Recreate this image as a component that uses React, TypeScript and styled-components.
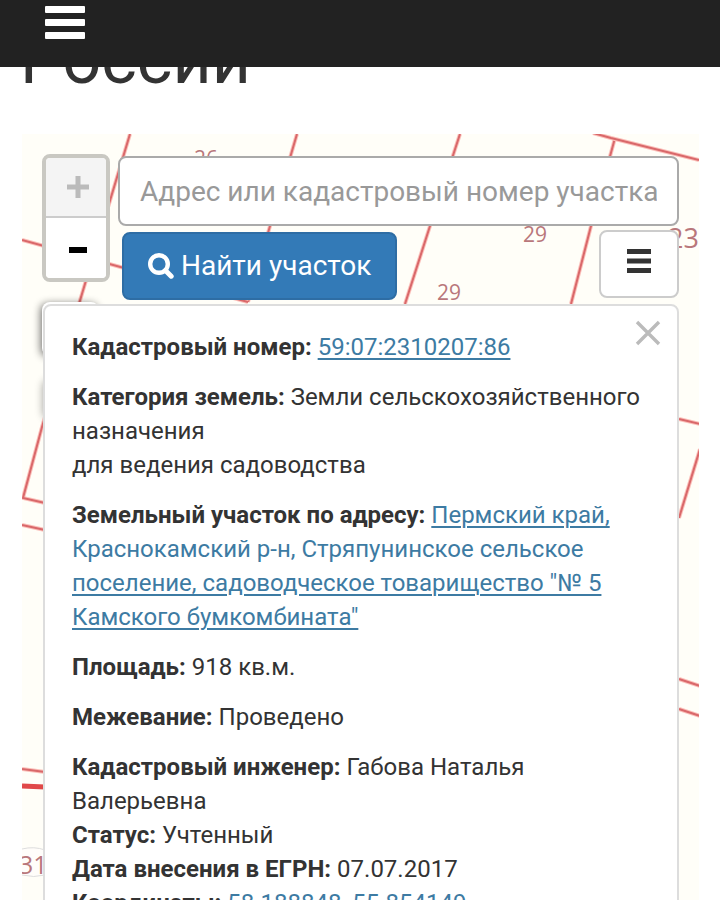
import React from "react";
import styled, { createGlobalStyle } from "styled-components";

const GlobalStyle = createGlobalStyle`
  * { box-sizing: border-box; }
  body {
    margin: 0;
    background: #fff;
    color: #333;
    font-family: Roboto, "Liberation Sans", sans-serif;
    font-size: 24px;
    line-height: 34px;
  }
  button, input { font: inherit; }
`;

const Page = styled.div`
  height: 100vh;
  overflow: hidden;
  display: flex;
  flex-direction: column;
`;

const Header = styled.header`
  position: fixed;
  inset: 0 0 auto 0;
  z-index: 10;
  height: 67px;
  padding: 6px 45px;
  background: #222;
`;

const NavToggle = styled.button`
  display: block;
  padding: 0;
  border: 0;
  background: none;
  cursor: pointer;

  svg { display: block; }
`;

const Title = styled.h1`
  flex: none;
  margin: 0;
  padding: 20px 20px 34px;
  font-size: 68px;
  font-weight: 400;
  line-height: 80px;
`;

const MapArea = styled.main`
  position: relative;
  flex: 1;
  min-height: 0;
  margin: 0 21px 0 22px;
  padding: 20px 20px 0;
  background: #fffef8;
  display: flex;
  flex-direction: column;
  gap: 4px;
`;

const MapDrawing = styled.svg`
  position: absolute;
  inset: 0;
  width: 100%;
  height: 100%;
`;

const Controls = styled.div`
  position: relative;
  display: flex;
  align-items: flex-start;
  gap: 8px;
`;

const ZoomBar = styled.div`
  flex: none;
  width: 68px;
  border: 4px solid #c9c8c2;
  border-radius: 8px;
  overflow: hidden;
`;

const ZoomButton = styled.button`
  display: flex;
  align-items: center;
  justify-content: center;
  width: 100%;
  height: 60px;
  padding: 4px 0 0 4px;
  border: 0;
  background: #fff;
  color: #000;
  cursor: pointer;

  &:disabled {
    padding: 0 0 0 4px;
    border-bottom: 2px solid #ccc;
    background: #f4f4f4;
    color: #bbb;
    cursor: default;
  }
`;

const SearchForm = styled.form`
  flex: 1;
  min-width: 0;
  padding-top: 2px;
  display: flex;
  flex-direction: column;
  gap: 4px;
`;

const SearchInput = styled.input`
  width: 100%;
  height: 70px;
  padding: 0 20px;
  border: 2px solid #aaa;
  border-radius: 8px;
  background: #fff;
  color: #555;
  font-size: 28px;

  &::placeholder { color: #999; opacity: 1; }
`;

const ButtonRow = styled.div`
  display: flex;
  justify-content: space-between;
  padding-left: 4px;
`;

const FindButton = styled.button`
  display: flex;
  align-items: center;
  gap: 7px;
  height: 68px;
  margin-top: 2px;
  padding: 0 24px;
  border: 2px solid #2e6da4;
  border-radius: 8px;
  background: #337ab7;
  color: #fff;
  font-size: 28px;
  cursor: pointer;
`;

const MenuButton = styled.button`
  display: flex;
  align-items: center;
  justify-content: center;
  width: 80px;
  height: 68px;
  padding: 0 0 6px;
  border: 2px solid #ccc;
  border-radius: 8px;
  background: #fff;
  cursor: pointer;
`;

const InfoCard = styled.section`
  position: relative;
  flex: none;
  margin-left: 1px;
  padding: 24px 27px;
  border: 2px solid #ddd;
  border-radius: 8px;
  background: #fff;
`;

const CloseButton = styled.button`
  position: absolute;
  top: 14px;
  right: 16px;
  padding: 0;
  border: 0;
  background: none;
  cursor: pointer;

  svg { display: block; }
`;

const Paragraph = styled.p`
  margin: 0 0 16px;
`;

const Label = styled.b`
  font-weight: 700;
`;

const Link = styled.a`
  color: #3d7ba3;
  text-decoration: none;
`;

const Underlined = styled.span`
  text-decoration: underline;
  text-decoration-thickness: 2px;
  text-underline-offset: 3px;
`;

const boundaries = [
  "M130 134 L42 427 L23 498 L45 503",
  "M297 134 L270 226 L248 302",
  "M460 134 L430 226 L405 304",
  "M615 138 L591 226 L571 304",
  "M593 133 L611 138 L699 160",
  "M22 240 L248 302",
  "M22 525 L45 530",
  "M22 769 L45 772",
  "M679 419 L700 424",
  "M700 449 L679 518",
  "M679 679 L700 686",
  "M679 709 L700 716",
];

const plotNumbers = [
  { x: 194, y: 166, size: 21, text: "26" },
  { x: 523, y: 242, size: 21, text: "29" },
  { x: 437, y: 300, size: 21, text: "29" },
  { x: 668, y: 248, size: 27, text: "23" },
  { x: 19, y: 874, size: 25, text: "31" },
];

function PlotMap() {
  return (
    <MapDrawing viewBox="22 134 677 766" preserveAspectRatio="xMinYMin slice" aria-hidden="true">
      <defs>
        <filter id="shade" x="-50%" y="-50%" width="200%" height="200%">
          <feGaussianBlur stdDeviation="4" />
        </filter>
      </defs>
      <g fill="none">
        {boundaries.map((d) => (
          <React.Fragment key={d}>
            <path d={d} stroke="#fbc0ba" strokeWidth="4" />
            <path d={d} stroke="#d9686a" strokeWidth="2" />
          </React.Fragment>
        ))}
        <path d="M22 786 L45 787" stroke="#e04848" strokeWidth="5" />
      </g>
      <path d="M22 849 Q34 846 45 850 V875 Q34 878 22 875" fill="#fffdfa" stroke="#ddd" />
      {plotNumbers.map((n) => (
        <text
          key={`${n.x}-${n.y}`}
          x={n.x}
          y={n.y}
          fontSize={n.size}
          fontWeight="500"
          fontFamily='"Open Sans", "Noto Sans", sans-serif'
          fill="#b9777b"
        >
          {n.text}
        </text>
      ))}
      <g fill="#000" opacity="0.6" filter="url(#shade)">
        <rect x="41" y="304" width="56" height="52" rx="6" />
        <rect x="43" y="380" width="54" height="38" rx="6" opacity="0.6" />
      </g>
      <rect x="42" y="302" width="57" height="54" rx="8" fill="#fff" />
    </MapDrawing>
  );
}

export default function App() {
  return (
    <>
      <GlobalStyle />
      <Page>
        <Header>
          <NavToggle type="button" aria-label="Меню">
            <svg width="40" height="33" viewBox="0 0 40 33" fill="#fff">
              <rect width="40" height="7" rx="1" />
              <rect y="13" width="40" height="7" rx="1" />
              <rect y="26" width="40" height="7" rx="1" />
            </svg>
          </NavToggle>
        </Header>
        <Title>России</Title>
        <MapArea>
          <PlotMap />
          <Controls>
            <ZoomBar>
              <ZoomButton type="button" disabled aria-label="Приблизить">
                <svg width="22" height="22" viewBox="0 0 22 22" fill="currentColor">
                  <path d="M8.5 0h5v8.5H22v5h-8.5V22h-5v-8.5H0v-5h8.5z" />
                </svg>
              </ZoomButton>
              <ZoomButton type="button" aria-label="Отдалить">
                <svg width="18" height="6" viewBox="0 0 18 6" fill="currentColor">
                  <path d="M0 0h18v6H0z" />
                </svg>
              </ZoomButton>
            </ZoomBar>
            <SearchForm onSubmit={(e) => e.preventDefault()}>
              <SearchInput
                type="text"
                aria-label="Адрес или кадастровый номер участка"
                placeholder="Адрес или кадастровый номер участка"
              />
              <ButtonRow>
                <FindButton type="submit">
                  <svg width="26" height="26" viewBox="0 0 26 26" fill="none" stroke="#fff" aria-hidden="true">
                    <circle cx="11" cy="11" r="8.8" strokeWidth="4.4" />
                    <path d="M17.5 17.5 L23.2 23.2" strokeWidth="5" strokeLinecap="round" />
                  </svg>
                  Найти участок
                </FindButton>
                <MenuButton type="button" aria-label="Слои">
                  <svg width="24" height="24" viewBox="0 0 24 24" fill="#333">
                    <path d="M0 0h24v5H0z M0 9.5h24v5H0z M0 19h24v5H0z" />
                  </svg>
                </MenuButton>
              </ButtonRow>
            </SearchForm>
          </Controls>
          <InfoCard>
            <CloseButton type="button" aria-label="Закрыть">
              <svg width="26" height="26" viewBox="0 0 26 26" fill="none" stroke="#bbb" strokeWidth="3.4">
                <path d="M2 2 L24 24 M24 2 L2 24" />
              </svg>
            </CloseButton>
            <Paragraph>
              <Label>Кадастровый номер:</Label>{" "}
              <Link href="#plot"><Underlined>59:07:2310207:86</Underlined></Link>
            </Paragraph>
            <Paragraph>
              <Label>Категория земель:</Label> Земли сельскохозяйственного назначения
              <br />
              для ведения садоводства
            </Paragraph>
            <Paragraph>
              <Label>Земельный участок по адресу:</Label>{" "}
              <Link href="#address">
                <Underlined>Пермский край,</Underlined> Краснокамский р-н, Стряпунинское сельское{" "}
                <Underlined>поселение, садоводческое товарищество "№ 5 Камского бумкомбината"</Underlined>
              </Link>
            </Paragraph>
            <Paragraph>
              <Label>Площадь:</Label> 918 кв.м.
            </Paragraph>
            <Paragraph>
              <Label>Межевание:</Label> Проведено
            </Paragraph>
            <Paragraph>
              <Label>Кадастровый инженер:</Label> Габова Наталья Валерьевна
              <br />
              <Label>Статус:</Label> Учтенный
              <br />
              <Label>Дата внесения в ЕГРН:</Label> 07.07.2017
              <br />
              <Label>Координаты:</Label> <Link href="#coordinates">58.188848, 55.854149</Link>
            </Paragraph>
          </InfoCard>
        </MapArea>
      </Page>
    </>
  );
}
